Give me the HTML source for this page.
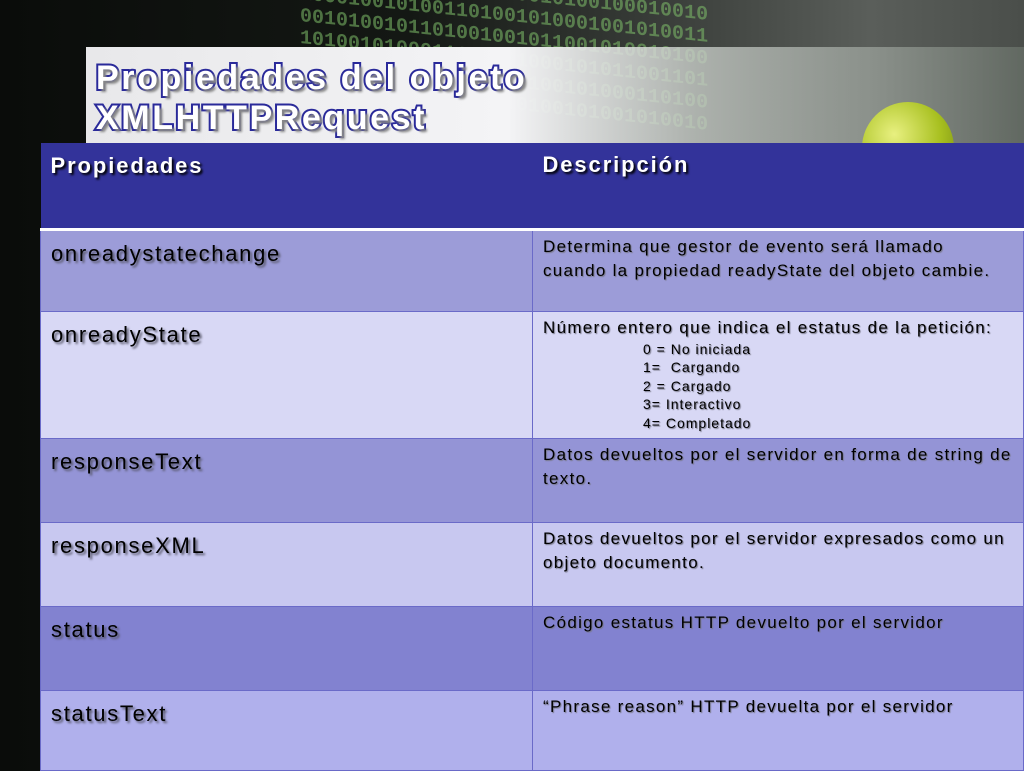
<!DOCTYPE html>
<html><head><meta charset="utf-8"><style>
*{margin:0;padding:0;box-sizing:border-box}
body{width:1024px;height:768px;overflow:hidden;position:relative;font-family:"Liberation Sans",sans-serif;
background:linear-gradient(90deg,#0a0c0a 0%,#141814 40%,#3a3e3a 65%,#5a5e5a 85%,#4a4e4a 100%)}
.bits{position:absolute;left:300px;top:0;width:724px;height:143px;color:#7fbf6a;font:bold 20px "Liberation Mono",monospace;opacity:.55;line-height:22px;white-space:nowrap;overflow:hidden;transform:skewY(6deg)}
.banner{position:absolute;left:86px;top:47px;width:938px;height:96px;background:linear-gradient(90deg,#e8e8ea 0%,#f4f4f6 45%,rgba(200,205,200,.8) 65%,rgba(120,130,120,.5) 100%)}
.ball{position:absolute;left:862px;top:102px;width:92px;height:92px;border-radius:50%;background:radial-gradient(circle at 35% 35%,#e8f080,#a8c020 55%,#6a8010)}
.title{position:absolute;left:96px;top:58px;font:bold 34px/40px "Liberation Sans",sans-serif;color:#fff;-webkit-text-stroke:4px #2a2a9a;paint-order:stroke fill;letter-spacing:2.6px;text-shadow:3px 3px 2px #888}
table{position:absolute;left:40px;top:143px;width:984px;border-collapse:collapse}
td{vertical-align:top;border:1px solid #6a6ac8;padding:0 10px}
td:first-child{width:492px;font-size:22px;letter-spacing:1.7px;padding-top:10px;color:#000;text-shadow:2px 2px 2px #556}
td:last-child{font-size:17px;letter-spacing:1.3px;line-height:24px;padding-top:4px;padding-right:6px;text-shadow:1px 1px 1px #778;white-space:nowrap}
tr.h td{background:#33339a;color:#fff;font-weight:bold;font-size:22px;letter-spacing:1.9px;height:86px;border:none;border-bottom:3px solid #fff;padding-top:10px;text-shadow:2px 2px 2px #000}
tr.a td{background:#9c9cd8}
tr.b td{background:#d8d8f5}
.sub{font-size:14px;letter-spacing:1px;line-height:18.5px;padding-left:100px}
</style></head><body>
<div class="bits">0100101000101001010010100100010010<br>1000100101001101001010001001010011<br>0010100101101001001011001010010100<br>1010010100011110001000101011001101<br>0101000100110010100100101000110100<br>1001010010101001010100101001010010</div>
<div class="banner"></div>
<div class="ball"></div>
<div class="title">Propiedades del objeto<br>XMLHTTPRequest</div>
<table>
<tr class="h"><td>Propiedades</td><td style="font-size:22px;letter-spacing:1.9px">Descripción</td></tr>
<tr class="a" style="height:82px"><td>onreadystatechange</td><td>Determina que gestor de evento será llamado<br>cuando la propiedad readyState del objeto cambie.</td></tr>
<tr class="b" style="height:127px"><td>onreadyState</td><td>Número entero que indica el estatus de la petición:<div class="sub">0 = No iniciada<br>1=&nbsp; Cargando<br>2 = Cargado<br>3= Interactivo<br>4= Completado</div></td></tr>
<tr class="a" style="height:84px;"><td style="background:#9494d6">responseText</td><td style="background:#9494d6">Datos devueltos por el servidor en forma de string de<br>texto.</td></tr>
<tr class="b" style="height:84px"><td style="background:#c8c8f0">responseXML</td><td style="background:#c8c8f0">Datos devueltos por el servidor expresados como un<br>objeto documento.</td></tr>
<tr class="a" style="height:84px"><td style="background:#8282d0">status</td><td style="background:#8282d0">Código estatus HTTP devuelto por el servidor</td></tr>
<tr class="b" style="height:80px"><td style="background:#b0b0ec">statusText</td><td style="background:#b0b0ec">“Phrase reason” HTTP devuelta por el servidor</td></tr>
</table>
</body></html>
